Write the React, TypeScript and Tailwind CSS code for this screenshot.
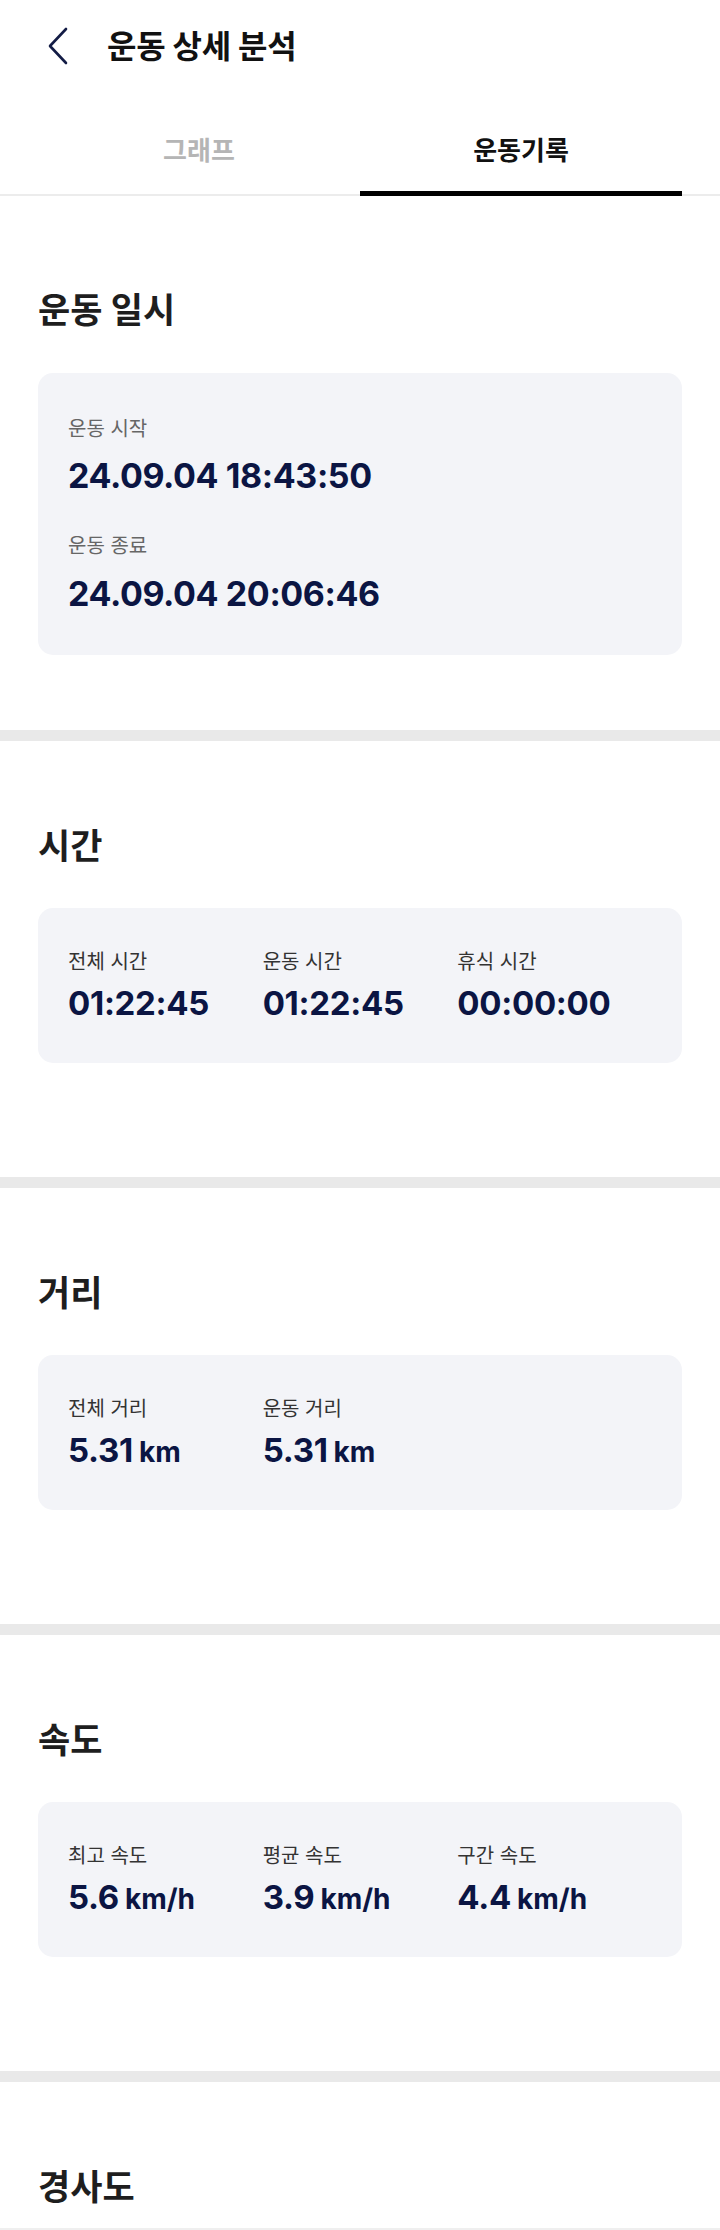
import React from 'react'

const FONT = "font-['Inter','Noto_Sans_CJK_KR',sans-serif]"

type Stat = { label: string; value: string; unit?: string }

const SECTIONS: { title: string; stats: Stat[] }[] = [
  {
    title: '시간',
    stats: [
      { label: '전체 시간', value: '01:22:45' },
      { label: '운동 시간', value: '01:22:45' },
      { label: '휴식 시간', value: '00:00:00' },
    ],
  },
  {
    title: '거리',
    stats: [
      { label: '전체 거리', value: '5.31', unit: 'km' },
      { label: '운동 거리', value: '5.31', unit: 'km' },
    ],
  },
  {
    title: '속도',
    stats: [
      { label: '최고 속도', value: '5.6', unit: 'km/h' },
      { label: '평균 속도', value: '3.9', unit: 'km/h' },
      { label: '구간 속도', value: '4.4', unit: 'km/h' },
    ],
  },
]

function Divider() {
  return <div className="h-[11px] bg-[#e9e9e9]" />
}

function Heading({ children }: { children: React.ReactNode }) {
  return <h2 className="text-[35px] leading-[40px] font-bold text-[#1e1e1e]">{children}</h2>
}

function StatCard({ stats }: { stats: Stat[] }) {
  return (
    <div className="mt-[42px] h-[155px] rounded-[15px] bg-[#f3f4f8] px-[30px] pt-[40px]">
      <div className="grid grid-cols-3">
        {stats.map((s) => (
          <div key={s.label}>
            <p className="text-[20px] leading-[28px] text-[#333333]">{s.label}</p>
            <p className="mt-[7px] flex items-baseline leading-[40px] font-bold text-[#0b1543]">
              <span className="text-[33px] tracking-[-0.3px]">{s.value}</span>
              {s.unit && <span className="ml-[6px] text-[28px]">{s.unit}</span>}
            </p>
          </div>
        ))}
      </div>
    </div>
  )
}

export default function App() {
  return (
    <div className={`${FONT} w-[720px] bg-white`}>
      <header className="flex h-[94px] items-center pl-[47px]">
        <svg width="22" height="38" viewBox="0 0 22 38" className="mb-[3px]" fill="none">
          <polyline
            points="19,2 3,19 19,36"
            stroke="#131c45"
            strokeWidth="2.6"
            strokeLinecap="round"
            strokeLinejoin="round"
          />
        </svg>
        <h1 className="ml-[38px] text-[32px] leading-[40px] font-bold tracking-[-0.3px] text-[#111111]">
          운동 상세 분석
        </h1>
      </header>

      <nav className="flex border-b-2 border-[#ececec] px-[38px]">
        <button className="-mb-[2px] flex h-[102px] flex-1 items-center justify-center border-b-[5px] border-transparent pt-[16px] text-[26px] leading-[32px] font-bold text-[#b5b5b5]">
          그래프
        </button>
        <button className="-mb-[2px] flex h-[102px] flex-1 items-center justify-center border-b-[5px] border-black pt-[16px] text-[26px] leading-[32px] font-bold text-[#111111]">
          운동기록
        </button>
      </nav>

      <section className="px-[38px] pt-[94px] pb-[75px]">
        <Heading>운동 일시</Heading>
        <div className="mt-[43px] h-[282px] rounded-[15px] bg-[#f3f4f8] px-[30px] pt-[42px]">
          <p className="text-[20px] leading-[28px] text-[#666666]">운동 시작</p>
          <p className="mt-[13px] text-[34px] leading-[40px] font-bold tracking-[-0.4px] text-[#0b1543]">
            24.09.04 18:43:50
          </p>
          <p className="mt-[36px] text-[20px] leading-[28px] text-[#666666]">운동 종료</p>
          <p className="mt-[14px] text-[34px] leading-[40px] font-bold tracking-[-0.4px] text-[#0b1543]">
            24.09.04 20:06:46
          </p>
        </div>
      </section>

      {SECTIONS.map((sec) => (
        <React.Fragment key={sec.title}>
          <Divider />
          <section className="px-[38px] pt-[85px] pb-[114px]">
            <Heading>{sec.title}</Heading>
            <StatCard stats={sec.stats} />
          </section>
        </React.Fragment>
      ))}

      <Divider />
      <section className="px-[38px] pt-[85px]">
        <Heading>경사도</Heading>
      </section>
      <div className="mt-[21px] h-[2px] bg-[#efefef]" />
    </div>
  )
}
